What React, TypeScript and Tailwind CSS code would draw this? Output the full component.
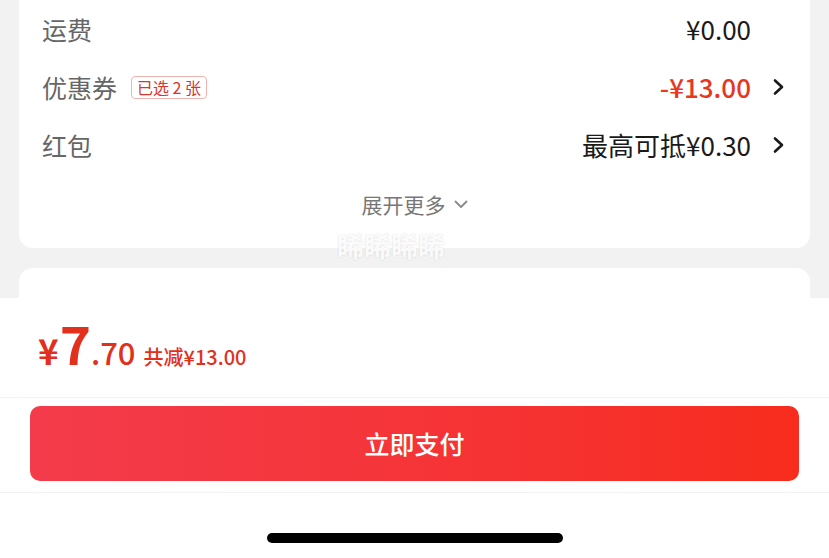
const FONT = { fontFamily: '"Noto Sans CJK SC", "Noto Sans", sans-serif' };

function ChevronRight() {
  return (
    <svg width="11" height="18" viewBox="0 0 11 18" fill="none">
      <polyline points="2,2.5 9,9 2,15.5" stroke="#1a1a1a" strokeWidth="2.6" strokeLinecap="round" strokeLinejoin="round" />
    </svg>
  );
}

function ChevronDown() {
  return (
    <svg width="14" height="9" viewBox="0 0 14 9" fill="none">
      <polyline points="1.5,1.5 7,7 12.5,1.5" stroke="#8a8a8a" strokeWidth="1.8" strokeLinecap="round" strokeLinejoin="round" />
    </svg>
  );
}

type Row = { label: string; badge?: string; value: string; red?: boolean; arrow?: boolean };

const rows: Row[] = [
  { label: "运费", value: "¥0.00" },
  { label: "优惠券", badge: "已选 2 张", value: "-¥13.00", red: true, arrow: true },
  { label: "红包", value: "最高可抵¥0.30", arrow: true },
];

export default function App() {
  return (
    <div className="relative w-[829px] h-[558px] overflow-hidden bg-[#f2f2f2] flex flex-col" style={FONT}>
      {/* Summary card */}
      <div className="mx-[19px] bg-white rounded-b-[14px] pb-[14px]">
        {rows.map((r) => (
          <div key={r.label} className="h-[58px] flex items-center pl-[23px] pr-[26px]">
            <span className="text-[25px] text-[#666666] leading-none">{r.label}</span>
            {r.badge && (
              <span className="ml-[14px] h-[23px] px-[5px] flex items-center rounded-[4px] border border-[#efb4b1] text-[16px] leading-none text-[#d8352c]">
                {r.badge}
              </span>
            )}
            <span
              className={`ml-auto text-[26px] leading-none ${r.red ? "text-[#e8361f] font-medium" : "text-[#1a1a1a]"}`}
            >
              {r.value}
            </span>
            <span className="w-[33px] flex justify-end">{r.arrow && <ChevronRight />}</span>
          </div>
        ))}
        <div className="h-[60px] flex items-center justify-center gap-[8px]">
          <span className="text-[21px] text-[#777777] leading-none">展开更多</span>
          <ChevronDown />
        </div>
      </div>

      {/* Watermark */}
      <div
        className="absolute left-[337px] top-[232px] text-[27px] font-bold leading-none text-white/90"
        style={{ textShadow: "0 0 1.5px rgba(0,0,0,0.18)" }}
      >
        睎睎睎睎
      </div>

      {/* Next card peeking */}
      <div className="mx-[19px] mt-[20px] h-[30px] bg-white rounded-t-[14px]" />

      {/* Bottom pay bar */}
      <div className="flex-1 bg-white flex flex-col">
        <div className="h-[99px] flex items-end pl-[38px] pb-[28px]">
          <div className="flex items-baseline text-[#e2301c] leading-none">
            <span className="text-[35px] font-semibold">¥</span>
            <span className="text-[53px] font-semibold ml-[1px]">7</span>
            <span className="text-[31px] font-medium">.70</span>
            <span className="text-[20px] font-medium ml-[8px]">共减¥13.00</span>
          </div>
        </div>
        <div className="border-t border-[#f3f3f3] px-[30px] pt-[8px] pb-[11px]">
          <button className="w-full h-[75px] rounded-[10px] bg-gradient-to-r from-[#f33b4b] to-[#f72c1c] text-white text-[25px] font-medium flex items-center justify-center">
            立即支付
          </button>
        </div>
        <div className="border-t border-[#f3f3f3] flex-1 flex justify-center pt-[40px]">
          <div className="w-[296px] h-[10px] rounded-full bg-black" />
        </div>
      </div>
    </div>
  );
}
